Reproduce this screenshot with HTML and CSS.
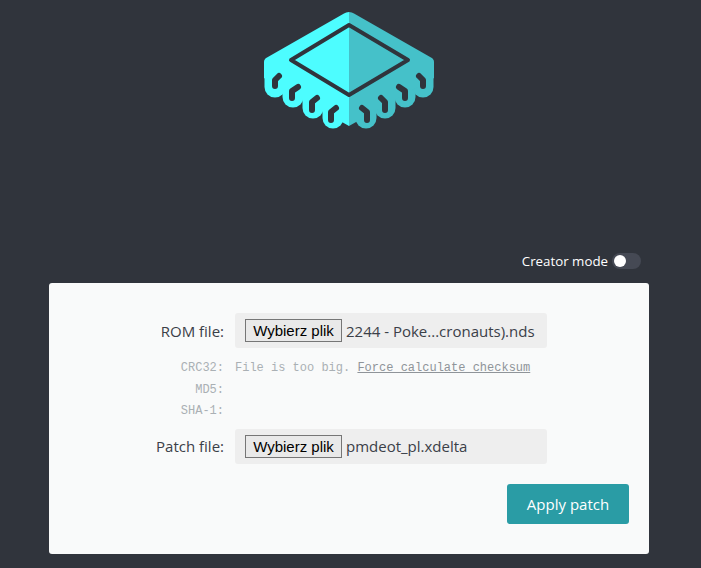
FILE: index.html
```html
<!DOCTYPE html>
<html lang="en">
<head>
    <meta charset="UTF-8">
    <title>Rom Patcher</title>
    <link rel="stylesheet" href="styles.css">
</head>
<body>
<div class="wrap">
    <div class="logo">
        <svg width="170" height="120" viewBox="264 10 170 120">
            <g class="lobes-left">
                <line x1="275" y1="70" x2="275" y2="87"></line>
                <line x1="293" y1="80" x2="293" y2="97"></line>
                <line x1="313" y1="90" x2="313" y2="108"></line>
                <line x1="333" y1="100" x2="333" y2="118"></line>
            </g>
            <g class="lobes-right">
                <line x1="366" y1="100" x2="366" y2="118"></line>
                <line x1="385" y1="90" x2="385" y2="108"></line>
                <line x1="405" y1="80" x2="405" y2="97"></line>
                <line x1="423" y1="70" x2="423" y2="87"></line>
            </g>
            <path class="left" d="M349 12 Q346 12 344 13.500 L267 57.500 Q264 59 264 62 L264 78 L349 126 Z"></path>
            <path class="right" d="M349 12 Q352 12 354 13.500 L431 57.500 Q434 59 434 62 L434 78 L349 126 Z"></path>
            <path class="diamond" d="M349 25 L408 60 L349 95 L291 60 Z"></path>
            <g class="slots">
                <path d="M279 76 L275 80 L275 86"></path>
                <path d="M298 87 L292 91 L292 98"></path>
                <path d="M317 98 L312 102 L312 110"></path>
                <path d="M336 108 L331 112 L331 120"></path>
                <path d="M362 108 L367 112 L367 120"></path>
                <path d="M381 98 L385 102 L385 110"></path>
                <path d="M399 87 L405 91 L405 98"></path>
                <path d="M419 76 L423 80 L423 86"></path>
            </g>
        </svg>
    </div>

    <div class="mode">
        <span>Creator mode</span>
        <div class="switch"><div class="knob"></div></div>
    </div>

    <div class="card">
        <div class="row">
            <label>ROM file:</label>
            <div class="field"><button class="pick">Wybierz plik</button><span>2244 - Poke...cronauts).nds</span></div>
        </div>
        <div class="info">
            <div class="key">CRC32:</div>
            <div class="val">File is too big. <a href="#">Force calculate checksum</a></div>
            <div class="key">MD5:</div>
            <div class="val"></div>
            <div class="key">SHA-1:</div>
            <div class="val"></div>
        </div>
        <div class="row">
            <label>Patch file:</label>
            <div class="field"><button class="pick">Wybierz plik</button><span>pmdeot_pl.xdelta</span></div>
        </div>
        <div class="actions">
            <button class="apply">Apply patch</button>
        </div>
    </div>
</div>
</body>
</html>
```

FILE: styles.css
```css
* {
    margin: 0;
    padding: 0;
    box-sizing: border-box;
}

body {
    background: #30343c;
    font-family: "Open Sans", "Noto Sans", sans-serif;
    font-size: 15px;
    color: #3b4048;
}

.wrap {
    width: 600px;
    margin-left: 49px;
}

.logo {
    display: flex;
    justify-content: center;
    padding-top: 10px;
    height: 250px;
}

.logo svg {
    display: block;
    margin-left: -1px;
}

.lobes-left line, .lobes-right line {
    stroke-width: 21px;
    stroke-linecap: round;
}

.lobes-left line {
    stroke: #4dfdff;
}

.lobes-right line {
    stroke: #45c1c9;
}

.left {
    fill: #4dfdff;
}

.right {
    fill: #45c1c9;
}

.diamond {
    fill: none;
    stroke: #30343c;
    stroke-width: 4px;
    stroke-linejoin: round;
}

.slots path {
    fill: none;
    stroke: #30343c;
    stroke-width: 6px;
    stroke-linecap: round;
    stroke-linejoin: round;
}

.mode {
    display: flex;
    justify-content: flex-end;
    align-items: center;
    gap: 4px;
    height: 22px;
    color: #fff;
    font-size: 13.300px;
    padding-right: 8px;
}

.switch {
    width: 29px;
    height: 16px;
    border-radius: 8px;
    background: #454954;
    padding: 2px;
}

.knob {
    width: 12px;
    height: 12px;
    border-radius: 50%;
    background: #fff;
}

.card {
    margin-top: 11px;
    height: 271px;
    background: #f9fafa;
    border-radius: 3px;
    padding-top: 30px;
}

.row {
    display: grid;
    grid-template-columns: 175px 312px;
    column-gap: 11px;
    align-items: center;
}

.row label {
    text-align: right;
}

.field {
    display: flex;
    align-items: center;
    gap: 4px;
    height: 35px;
    padding-left: 10px;
    background: #eee;
    border-radius: 3px;
}

.pick {
    width: 97px;
    height: 23px;
    font-family: "Liberation Sans", sans-serif;
    font-size: 15px;
    color: #000;
    background: #e9e9e9;
    border: 1px solid #767676;
}

.info {
    display: grid;
    grid-template-columns: 175px 312px;
    column-gap: 11px;
    grid-auto-rows: 21.500px;
    padding: 10px 0 6px;
    font-family: "Liberation Mono", monospace;
    font-size: 12px;
    line-height: 21.500px;
    color: #aab0b4;
}

.key {
    text-align: right;
}

.val a {
    color: #8f9499;
}

.actions {
    display: flex;
    justify-content: flex-end;
    padding: 20px 20px 0 0;
}

.apply {
    width: 122px;
    height: 40px;
    font-family: "Open Sans", "Noto Sans", sans-serif;
    font-size: 15px;
    color: #fff;
    background: #2a9ca5;
    border: none;
    border-radius: 3px;
}
```
